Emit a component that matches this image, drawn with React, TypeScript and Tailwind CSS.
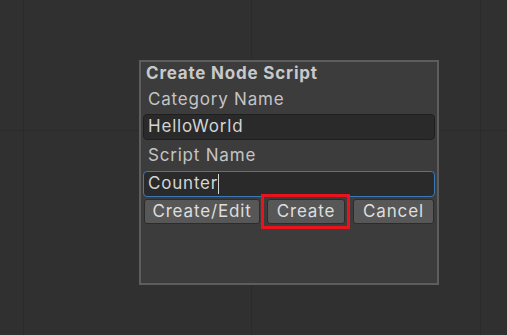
import React from "react";

const font = { fontFamily: "Inter, 'Noto Sans', sans-serif" };

const Button = ({ label, w, highlight }: { label: string; w: string; highlight?: boolean }) => (
  <div className={`relative ${w}`}>
    <button className="h-[25px] w-full rounded-[3px] border border-[#2c2c2c] bg-[#575757] text-[17px] leading-none tracking-[0.05em] text-[#dedede]">
      {label}
    </button>
    {highlight && (
      <span className="pointer-events-none absolute -left-[6px] -right-[5px] -top-[5px] -bottom-[5px] border-[3px] border-[#e8141c]" />
    )}
  </div>
);

export default function App() {
  return (
    <div
      className="relative h-[335px] w-[507px] overflow-hidden bg-[#303030] pt-[60px] pl-[139px]"
      style={font}
    >
      {/* canvas grid */}
      <div className="absolute left-[23px] top-0 h-full w-px bg-[#2a2a2a]" />
      <div className="absolute left-[251px] top-0 h-full w-px bg-[#2a2a2a]" />
      <div className="absolute left-[480px] top-0 h-full w-px bg-[#2a2a2a]" />
      <div className="absolute left-0 top-[130px] h-px w-full bg-[#2a2a2a]" />

      <div className="relative flex h-[225px] w-[300px] flex-col border-2 border-[#5d5d5d] bg-[#3c3c3c] px-[2px] tracking-[0.05em]">
        <div className="flex h-[24px] items-center pl-[3px] text-[17px] font-bold text-[#c9c9c9]">
          Create Node Script
        </div>
        <div className="flex h-[28px] items-center pl-[5px] text-[17px] text-[#c4c4c4]">Category Name</div>
        <div className="flex h-[26px] items-center rounded-[4px] border border-[#1f1f1f] bg-[#2a2a2a] pl-[4px] text-[17px] text-[#d4d4d4]">
          HelloWorld
        </div>
        <div className="flex h-[31px] items-center pl-[5px] text-[17px] text-[#c4c4c4]">Script Name</div>
        <div className="flex h-[26px] items-center rounded-[4px] border border-[#3a78b8] bg-[#2a2a2a] pl-[4px] text-[17px] text-[#d4d4d4]">
          Counter
          <span className="h-[20px] w-px bg-[#d4d4d4]" />
        </div>
        <div className="mt-[2px] flex pl-[1px]">
          <Button label="Create/Edit" w="w-[116px]" />
          <div className="w-[7px]" />
          <Button label="Create" w="w-[78px]" highlight />
          <div className="w-[8px]" />
          <Button label="Cancel" w="w-[81px]" />
        </div>
      </div>
    </div>
  );
}
